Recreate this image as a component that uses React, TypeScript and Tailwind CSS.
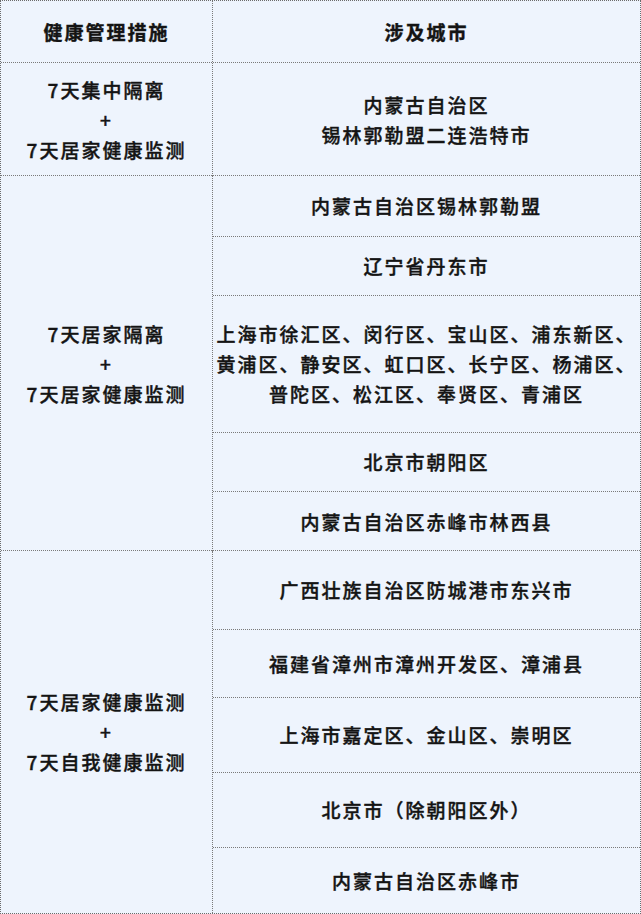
const FONT = "font-['Noto_Sans_CJK_SC','Noto_Sans',sans-serif]";

type Cell = { lines: string[]; h: string };

const GROUPS: Array<{ left: string[]; h: string; cells: Cell[] }> = [
  {
    left: ["7天集中隔离", "+", "7天居家健康监测"],
    h: "h-[113px]",
    cells: [{ lines: ["内蒙古自治区", "锡林郭勒盟二连浩特市"], h: "h-[113px]" }],
  },
  {
    left: ["7天居家隔离", "+", "7天居家健康监测"],
    h: "h-[375px]",
    cells: [
      { lines: ["内蒙古自治区锡林郭勒盟"], h: "h-[61px]" },
      { lines: ["辽宁省丹东市"], h: "h-[59px]" },
      {
        lines: [
          "上海市徐汇区、闵行区、宝山区、浦东新区、",
          "黄浦区、静安区、虹口区、长宁区、杨浦区、",
          "普陀区、松江区、奉贤区、青浦区",
        ],
        h: "h-[137px]",
      },
      { lines: ["北京市朝阳区"], h: "h-[59px]" },
      { lines: ["内蒙古自治区赤峰市林西县"], h: "h-[59px]" },
    ],
  },
  {
    left: ["7天居家健康监测", "+", "7天自我健康监测"],
    h: "h-[362px]",
    cells: [
      { lines: ["广西壮族自治区防城港市东兴市"], h: "h-[79px]" },
      { lines: ["福建省漳州市漳州开发区、漳浦县"], h: "h-[68px]" },
      { lines: ["上海市嘉定区、金山区、崇明区"], h: "h-[75px]" },
      { lines: ["北京市（除朝阳区外）"], h: "h-[75px]" },
      { lines: ["内蒙古自治区赤峰市"], h: "h-[65px]" },
    ],
  },
];

function Lines({ lines }: { lines: string[] }) {
  return (
    <div className="text-center">
      {lines.map((line, i) => (
        <div key={i} className="whitespace-nowrap">
          {line}
        </div>
      ))}
    </div>
  );
}

export default function App() {
  return (
    <div
      className={`${FONT} w-[641px] h-[914px] border border-dotted border-[#6b6b6b] bg-[#eef4fd] text-[19px] leading-[30px] tracking-[2px] text-[#141414] font-medium [-webkit-text-stroke:0.4px_#141414]`}
    >
      <div className="grid h-[62px] grid-cols-[212px_1fr] border-b border-dotted border-[#7a7a7a] font-bold">
        <div className="flex items-center justify-center border-r border-dotted border-[#7a7a7a]">
          健康管理措施
        </div>
        <div className="flex items-center justify-center">涉及城市</div>
      </div>
      {GROUPS.map((group, gi) => (
        <div
          key={gi}
          className={`grid grid-cols-[212px_1fr] ${group.h} ${
            gi < GROUPS.length - 1 ? "border-b border-dotted border-[#7a7a7a]" : ""
          }`}
        >
          <div className="flex items-center justify-center border-r border-dotted border-[#7a7a7a]">
            <Lines lines={group.left} />
          </div>
          <div className="flex flex-col">
            {group.cells.map((cell, ci) => (
              <div
                key={ci}
                className={`flex items-center justify-center ${cell.h} ${
                  ci < group.cells.length - 1 ? "border-b border-dotted border-[#7a7a7a]" : ""
                }`}
              >
                <Lines lines={cell.lines} />
              </div>
            ))}
          </div>
        </div>
      ))}
    </div>
  );
}
